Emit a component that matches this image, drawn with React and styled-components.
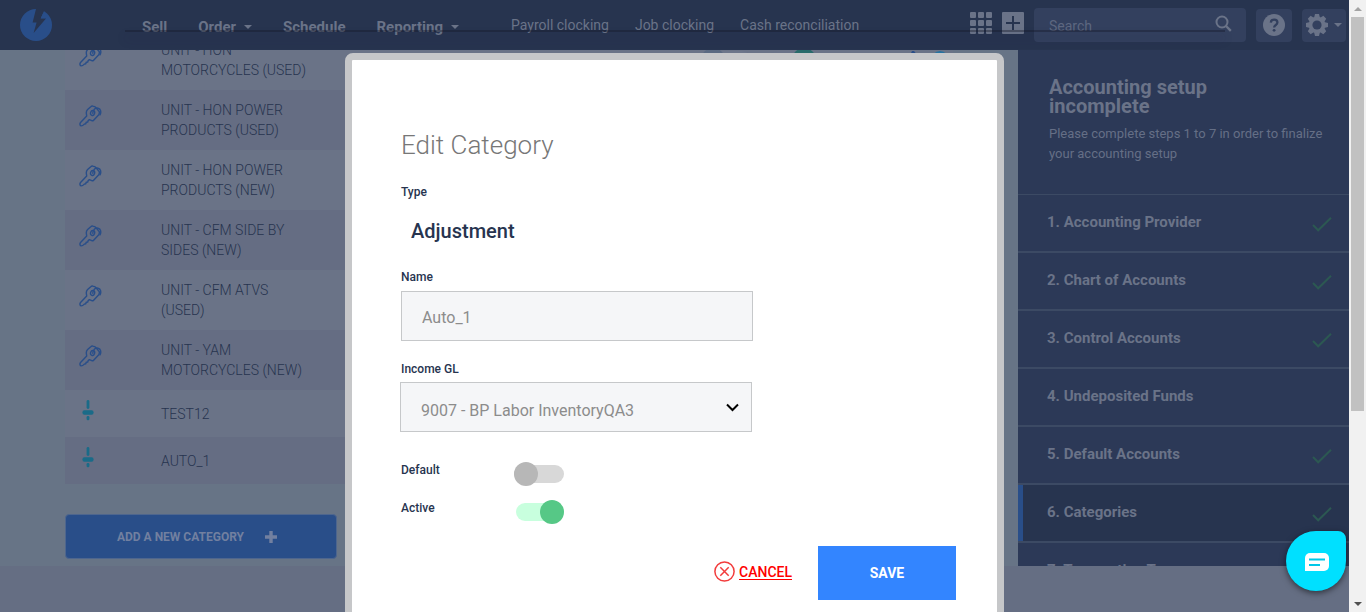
import React from "react";
import styled, { createGlobalStyle, css } from "styled-components";

const c = {
  nav: "#27344f",
  page: "#677486",
  footer: "#656e83",
  odd: "#6a7387",
  even: "#656d83",
  side: "#2c3957",
  sideLine: "#3c4a64",
  muted: "#6a7388",
  ink: "#27344f",
  blue: "#294e89",
  teal: "#1a6b88",
};

const Global = createGlobalStyle`
  *, *::before, *::after { box-sizing: border-box; }
  body { margin: 0; overflow: hidden; }
  body, button, input, select { font-family: Roboto, "Liberation Sans", sans-serif; }
`;

const Frame = styled.div`
  display: flex;
  height: 100vh;
  overflow: hidden;
`;

const Viewport = styled.div`
  position: relative;
  flex: 1;
  min-width: 0;
  overflow: hidden;
  background: ${c.footer};
`;

const Header = styled.header`
  position: relative;
  z-index: 1;
  display: flex;
  align-items: center;
  height: 50px;
  padding: 0 3px 0 20px;
  background: ${c.nav};
  color: ${c.muted};
`;

const MenuShadow = styled.div`
  position: absolute;
  top: 30px;
  left: 125px;
  right: 124px;
  height: 2px;
  background: rgba(20, 22, 40, 0.4);
  box-shadow: 0 7px 10px rgba(35, 38, 75, 0.3);
  pointer-events: none;
`;

const Primary = styled.nav`
  display: flex;
  gap: 31px;
  width: 369px;
  margin-left: 90px;
  padding-top: 3px;
`;

const Secondary = styled(Primary)`
  flex: 1;
  gap: 26px;
  width: auto;
  margin-left: 0;
  padding-top: 0;
`;

const NavLink = styled.a`
  display: flex;
  align-items: center;
  gap: 8px;
  color: inherit;
  font-size: ${(p) => (p.$main ? 15 : 14)}px;
  font-weight: ${(p) => (p.$main ? 700 : 400)};
  line-height: 20px;
  text-decoration: none;
  white-space: nowrap;
`;

const Caret = styled.span`
  border: 4px solid transparent;
  border-top-color: currentColor;
  border-bottom: 0;
`;

const Tools = styled.div`
  display: flex;
  align-items: center;
  gap: 10px;
`;

const ToolButton = styled.button`
  display: flex;
  align-items: center;
  justify-content: center;
  gap: 6px;
  width: ${(p) => p.$w}px;
  height: ${(p) => p.$h || p.$w}px;
  padding: 0;
  border: 0;
  border-radius: 4px;
  background: ${(p) => (p.$filled ? "#33405e" : "none")};
  color: inherit;
`;

const IconPair = styled.div`
  display: flex;
  gap: 10px;
  padding-bottom: 4px;
`;

const SearchBox = styled.label`
  display: flex;
  align-items: center;
  width: 212px;
  height: 34px;
  padding: 0 14px;
  border-radius: 4px;
  background: #33405e;
  svg { margin-bottom: 4px; }
`;

const SearchInput = styled.input`
  flex: 1;
  min-width: 0;
  padding: 2px 0 0 1px;
  border: 0;
  background: none;
  font-size: 14px;
  color: ${c.muted};
  &::placeholder { color: #5d6780; opacity: 1; }
`;

const Body = styled.div`
  display: flex;
  height: 516px;
  overflow: hidden;
`;

const Main = styled.main`
  flex: 1;
  min-width: 0;
  margin-top: -20px;
  padding: 0 65px;
  background: ${c.page};
`;

const Table = styled.table`
  width: 100%;
  border-collapse: collapse;
  table-layout: fixed;
`;

const Row = styled.tr`
  height: ${(p) => (p.$short ? 47 : 60)}px;
  background: ${c.odd};
  &:nth-child(even) { background: ${c.even}; }
`;

const Cell = styled.td`
  width: ${(p) => (p.$w ? p.$w + "px" : "auto")};
  padding: 0 0 0 ${(p) => p.$pad || 0}px;
  color: ${c.ink};
  font-size: 14px;
  font-weight: 300;
  line-height: 20px;
`;

const RowIcon = styled.span`
  display: flex;
  width: 24px;
  justify-content: ${(p) => (p.$pin ? "flex-end" : "center")};
  padding-right: ${(p) => (p.$pin ? 8 : 0)}px;
  margin-bottom: 8px;
`;

const Name = styled.div`
  width: 150px;
`;

const RowActions = styled.span`
  display: flex;
  gap: 12px;
`;

const AddButton = styled.button`
  display: flex;
  align-items: center;
  justify-content: center;
  gap: 21px;
  width: 272px;
  height: 45px;
  margin-top: 30px;
  padding: 0 8px 0 0;
  border: 1px solid #4e668e;
  border-radius: 4px;
  background: ${c.blue};
  color: #7280a0;
  font-size: 12px;
  font-weight: 700;
`;

const Sidebar = styled.aside`
  width: 331px;
  background: ${c.side};
  color: ${c.muted};
`;

const SideIntro = styled.div`
  height: 145px;
  padding: 28px 14px 0 31px;
  border-bottom: 1px solid ${c.sideLine};
`;

const SideTitle = styled.h2`
  width: 180px;
  margin: 0 0 8px;
  font-size: 20px;
  font-weight: 700;
  line-height: 19px;
`;

const SideText = styled.p`
  margin: 0;
  font-size: 13px;
  line-height: 20px;
  color: #656f86;
`;

const Steps = styled.ol`
  margin: 0;
  padding: 0;
  list-style: none;
`;

const Step = styled.li`
  display: flex;
  height: 58px;
  border-bottom: 2px solid ${c.sideLine};
  background: ${(p) => (p.$active ? c.nav : c.side)};
  box-shadow: inset ${(p) => (p.$active ? 5 : 0)}px 0 ${c.blue};
`;

const StepLink = styled.a`
  display: flex;
  flex: 1;
  justify-content: space-between;
  padding: 17px 17px 0 29px;
  color: inherit;
  font-size: 15px;
  font-weight: 700;
  line-height: 20px;
  text-decoration: none;
  svg { margin-top: 5px; }
`;

const Overlay = styled.div`
  position: absolute;
  inset: 53px 0 0;
  z-index: 2;
  display: flex;
  justify-content: center;
  align-items: flex-start;
`;

const Dialog = styled.form`
  width: 659px;
  height: 620px;
  padding: 69px 41px 40px 49px;
  border: 7px solid #c6c7c9;
  border-radius: 8px;
  background: #fff;
  color: #27344f;
`;

const DialogTitle = styled.h1`
  margin: 0;
  font-size: 26px;
  font-weight: 300;
  line-height: 32px;
  color: #777;
`;

const FieldLabel = styled.label`
  display: block;
  font-size: 12px;
  font-weight: 500;
  line-height: 16px;
`;

const TypeField = styled.div`
  height: 87px;
  padding-top: 23px;
`;

const TypeValue = styled.div`
  padding: 19px 10px 0;
  font-size: 20px;
  font-weight: 500;
  line-height: 24px;
`;

const Field = styled.div`
  height: 92px;
  padding-top: 21px;
`;

const control = css`
  width: 352px;
  height: 50px;
  padding: 3px 20px 0;
  border: 1px solid #c6c8ca;
  border-radius: 0;
  background: #f5f6f8;
  color: #8c8c8c;
  font-size: 16px;
  font-weight: 400;
`;

const TextInput = styled.input`
  ${control}
  display: block;
  margin-top: 6px;
`;

const SelectWrap = styled.div`
  display: grid;
  width: 352px;
  margin: 5px 0 0 -1px;
  > * { grid-area: 1 / 1; }
  > svg { place-self: center end; margin-right: 13px; pointer-events: none; }
`;

const Select = styled.select`
  ${control}
  appearance: none;
  padding-top: 7px;
`;

const SwitchRow = styled.div`
  display: flex;
  height: 38px;
  ${FieldLabel} { width: 113px; }
`;

const Switches = styled.div`
  padding-top: 30px;
`;

const Switch = styled.input`
  appearance: none;
  display: grid;
  align-items: center;
  width: 50px;
  height: 24px;
  margin: 0;
  &::before, &::after { content: ""; grid-area: 1 / 1; }
  &::before {
    height: 18px;
    border-radius: 9px;
    background: ${(p) => (p.$dim ? "#6d768a" : "#d8d8d8")};
  }
  &::after {
    width: 24px;
    height: 24px;
    border-radius: 50%;
    background: ${(p) => (p.$dim ? "#5b6a82" : "#b7b7b7")};
  }
  &:checked::before { margin-left: 2px; background: ${(p) => (p.$dim ? "#6a7388" : "#c8ffde")}; }
  &:checked::after { justify-self: end; background: ${(p) => (p.$dim ? "#286b6b" : "#56c886")}; }
`;

const Actions = styled.div`
  display: flex;
  align-items: center;
  justify-content: flex-end;
  gap: 26px;
  padding-top: 8px;
`;

const Cancel = styled.a`
  display: flex;
  align-items: center;
  gap: 4px;
  padding-bottom: 3px;
  color: #f00;
  font-size: 14px;
  font-weight: 500;
  line-height: 20px;
  text-decoration: none;
  span { text-decoration: underline; text-underline-offset: 2px; }
`;

const Save = styled.button`
  width: 138px;
  height: 54px;
  padding: 0;
  border: 0;
  background: #3385ff;
  color: #fff;
  font-size: 14px;
  font-weight: 700;
`;

const Chat = styled.button`
  position: absolute;
  right: 3px;
  bottom: 21px;
  z-index: 3;
  display: flex;
  align-items: center;
  justify-content: center;
  width: 60px;
  height: 60px;
  padding: 2px 0 0 2px;
  border: 0;
  border-radius: 50% 8px 50% 50%;
  background: #00e0ff;
  box-shadow: 0 2px 6px rgba(0, 0, 0, 0.55);
`;

const Scrollbar = styled.div`
  display: flex;
  flex-direction: column;
  align-items: center;
  justify-content: space-between;
  width: 17px;
  padding: 7px 0 6px;
  background: #f1f1f1;
`;

const Thumb = styled.div`
  flex: 1;
  width: 13px;
  margin: 6px 0;
  background: linear-gradient(#c1c1c1 68%, transparent 68%);
`;

const Logo = () => (
  <svg width="32" height="32" viewBox="0 0 32 32">
    <circle cx="16" cy="16" r="16" fill={c.blue} />
    <path d="M16 0 12.6 13.4h4L13.6 24 26 9.5h-5.4L24 2 22 0Z" fill={c.nav} />
    <path d="m23.5 3.5-2.7 5.7h4.8l2-2.4Z" fill={c.blue} />
  </svg>
);

const Grid = () => (
  <svg width="22" height="22" fill="currentColor">
    {[0, 8, 16].map((y) => [0, 8, 16].map((x) => <rect key={x + "-" + y} x={x} y={y} width="6" height="6" rx="1" />))}
  </svg>
);

const PlusBox = () => (
  <svg width="22" height="22">
    <rect width="22" height="22" rx="1" fill="currentColor" />
    <path d="M11 4v14M4 11h14" stroke={c.nav} strokeWidth="2" />
  </svg>
);

const SearchIcon = () => (
  <svg width="17" height="17" fill="none" stroke="currentColor" strokeWidth="2">
    <circle cx="7" cy="7" r="5.5" />
    <path d="m11 11 4.8 4.8" strokeWidth="2.4" />
  </svg>
);

const Help = () => (
  <svg width="22" height="22" fill="none">
    <circle cx="11" cy="11" r="11" fill="currentColor" />
    <path d="M7.8 8.6c.2-4 6.6-3.8 6.6 0 0 2.5-3.3 2.4-3.3 5" stroke="#33405e" strokeWidth="2.3" />
    <circle cx="11.1" cy="16.3" r="1.4" fill="#33405e" />
  </svg>
);

const Gear = () => (
  <svg width="22" height="22" viewBox="-11 -11 22 22" fill="currentColor">
    {[0, 45, 90, 135].map((a) => (
      <path key={a} d="M-2-11h4l1 4v14l-1 4h-4l-1-4v-14Z" transform={`rotate(${a})`} />
    ))}
    <circle r="8.3" />
    <circle r="4.6" fill="#33405e" />
  </svg>
);

const Key = () => (
  <svg width="24" height="22" fill="none" stroke={c.blue} strokeWidth="1.4" strokeLinejoin="round" strokeLinecap="round">
    <path d="m9.6 4.6 3.5-3.2c.5-.5 1.1-.6 1.8-.3l2.3.8 4.2 5-.4 2.6-5.6 5.9c-.5.5-1 .5-1.6.2l-2.4-1-1.3 1-.3 1.4-1.6.3-.4 1.4-1.5.4c-.8.9-1.7 1.9-3.2 1.8-1.3-.5-1.4-2-.8-3.1l6.4-6.7-.3-2.3c-.3-1.6.1-3.1 1.2-4.2Z" />
    <ellipse cx="14.6" cy="8" rx="2" ry="2.5" transform="rotate(20 14.6 8)" />
    <path d="M14.8 8.2c0-3.4 2.4-5.7 5.2-5 3 .8 3.5 4 2 6.6" />
  </svg>
);

const Pin = () => (
  <svg width="12" height="22" fill={c.teal}>
    <rect x="4.6" y="1" width="2.8" height="9" rx="1.4" />
    <rect x=".4" y="11.2" width="11.2" height="4.6" rx="2" />
    <rect x="4.6" y="17" width="2.8" height="4.2" rx="1.2" />
  </svg>
);

const Check = () => (
  <svg width="20" height="15" fill="none" stroke="#2c5852" strokeWidth="2">
    <path d="m1 8 5.2 5.3L19 .8" />
  </svg>
);

const Plus = () => (
  <svg width="12" height="12">
    <path d="M6 0v12M0 6h12" stroke="currentColor" strokeWidth="3.4" />
  </svg>
);

const PencilIcon = () => (
  <svg width="16" height="18" fill={c.blue}><path d="M9 0h2l4 5-8 10-5 2 2-6Z" /></svg>
);

const ViewIcon = () => (
  <svg width="18" height="18" fill="none" stroke="#2772a0" strokeWidth="2"><circle cx="9" cy="9" r="8" /><circle cx="9" cy="9" r="3" /></svg>
);

const Arrow = ({ down }) => (
  <svg width="8" height="4"><path d={down ? "M0 0h8L4 4Z" : "M0 4h8L4 0Z"} fill={down ? "#505050" : "#a3a3a3"} /></svg>
);

const categories = [
  "UNIT - HON MOTORCYCLES (USED)",
  "UNIT - HON POWER PRODUCTS (USED)",
  "UNIT - HON POWER PRODUCTS (NEW)",
  "UNIT - CFM SIDE BY SIDES (NEW)",
  "UNIT - CFM ATVS (USED)",
  "UNIT - YAM MOTORCYCLES (NEW)",
  "TEST12",
  "AUTO_1",
];

const steps = [
  ["Accounting Provider", true],
  ["Chart of Accounts", true],
  ["Control Accounts", true],
  ["Undeposited Funds", false],
  ["Default Accounts", true],
  ["Categories", true],
  ["Transaction Types", false],
];

export default function App() {
  return (
    <Frame>
      <Global />
      <Viewport>
        <Header>
          <Logo />
          <Primary>
            <NavLink $main href="#sell">Sell</NavLink>
            <NavLink $main href="#order">Order<Caret /></NavLink>
            <NavLink $main href="#schedule">Schedule</NavLink>
            <NavLink $main href="#reporting">Reporting<Caret /></NavLink>
          </Primary>
          <Secondary>
            <NavLink href="#payroll">Payroll clocking</NavLink>
            <NavLink href="#job">Job clocking</NavLink>
            <NavLink href="#cash">Cash reconciliation</NavLink>
          </Secondary>
          <Tools>
            <IconPair>
              <ToolButton $w={22} aria-label="Apps"><Grid /></ToolButton>
              <ToolButton $w={22} aria-label="Add"><PlusBox /></ToolButton>
            </IconPair>
            <SearchBox>
              <SearchInput placeholder="Search" aria-label="Search" />
              <SearchIcon />
            </SearchBox>
            <ToolButton $w={36} $h={33} $filled aria-label="Help"><Help /></ToolButton>
            <ToolButton $w={44} $h={33} $filled aria-label="Settings"><Gear /><Caret /></ToolButton>
          </Tools>
          <MenuShadow />
        </Header>
        <Body>
          <Main>
            <Table>
              <tbody>
                {categories.map((name, i) => (
                  <Row key={name} $short={i > 5}>
                    <Cell $w={96} $pad={13}>
                      <RowIcon $pin={i > 5}>{i > 5 ? <Pin /> : <Key />}</RowIcon>
                    </Cell>
                    <Cell><Name>{name}</Name></Cell>
                    <Cell $w={65}><Switch $dim type="checkbox" aria-label={`${name} default`} /></Cell>
                    <Cell $w={137}><Switch $dim type="checkbox" defaultChecked aria-label={`${name} active`} /></Cell>
                    <Cell $w={50}><RowActions><PencilIcon /><ViewIcon /></RowActions></Cell>
                  </Row>
                ))}
              </tbody>
            </Table>
            <AddButton>ADD A NEW CATEGORY<Plus /></AddButton>
          </Main>
          <Sidebar>
            <SideIntro>
              <SideTitle>Accounting setup incomplete</SideTitle>
              <SideText>Please complete steps 1 to 7 in order to finalize your accounting setup</SideText>
            </SideIntro>
            <Steps>
              {steps.map(([label, done], i) => (
                <Step key={label} $active={i === 5}>
                  <StepLink href={`#step-${i + 1}`}>{i + 1}. {label}{done && <Check />}</StepLink>
                </Step>
              ))}
            </Steps>
          </Sidebar>
        </Body>
        <Overlay>
          <Dialog role="dialog" aria-labelledby="dialog-title">
            <DialogTitle id="dialog-title">Edit Category</DialogTitle>
            <TypeField>
              <FieldLabel as="div">Type</FieldLabel>
              <TypeValue>Adjustment</TypeValue>
            </TypeField>
            <Field>
              <FieldLabel htmlFor="name">Name</FieldLabel>
              <TextInput id="name" defaultValue="Auto_1" />
            </Field>
            <Field>
              <FieldLabel htmlFor="gl">Income GL</FieldLabel>
              <SelectWrap>
                <Select id="gl"><option>9007 - BP Labor InventoryQA3</option></Select>
                <svg width="13" height="9" fill="none" stroke="#000" strokeWidth="2"><path d="m1 1.5 5.5 5.5L12 1.5" /></svg>
              </SelectWrap>
            </Field>
            <Switches>
              <SwitchRow>
                <FieldLabel htmlFor="default">Default</FieldLabel>
                <Switch id="default" type="checkbox" />
              </SwitchRow>
              <SwitchRow>
                <FieldLabel htmlFor="active">Active</FieldLabel>
                <Switch id="active" type="checkbox" defaultChecked />
              </SwitchRow>
            </Switches>
            <Actions>
              <Cancel href="#cancel">
                <svg width="21" height="21" fill="none" stroke="#f23c3c" strokeWidth="1.5"><circle cx="10.5" cy="10.5" r="9.6" /><path d="m6.3 6.3 8.4 8.4m0-8.4-8.4 8.4" /></svg>
                <span>CANCEL</span>
              </Cancel>
              <Save type="button">SAVE</Save>
            </Actions>
          </Dialog>
        </Overlay>
        <Chat aria-label="Chat">
          <svg width="24" height="18">
            <path d="M5 0h14a5 5 0 0 1 5 5v8a5 5 0 0 1-5 5H0V5a5 5 0 0 1 5-5Z" fill="#fff" />
            <path d="M4 6.5h16M4 12h11" stroke="#00c8e8" strokeWidth="1.8" />
          </svg>
        </Chat>
      </Viewport>
      <Scrollbar aria-hidden="true">
        <Arrow />
        <Thumb />
        <Arrow down />
      </Scrollbar>
    </Frame>
  );
}
